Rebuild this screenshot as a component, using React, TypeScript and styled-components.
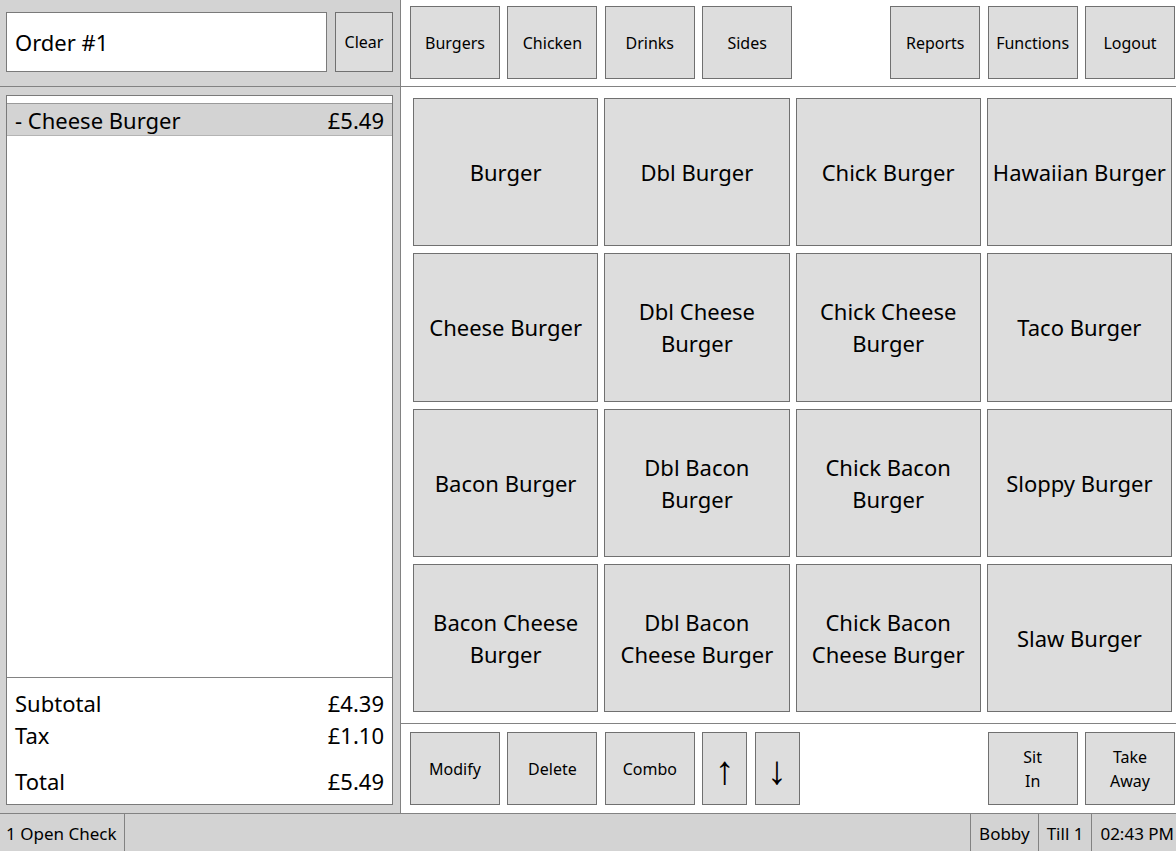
import React from 'react'
import styled, { createGlobalStyle } from 'styled-components'

const GlobalStyle = createGlobalStyle`
    html, body {
        margin:0;
        padding:0;
        background:#d3d3d3;
    }
    body {
        font-family:"Noto Sans", "Open Sans", sans-serif;
        color:#000;
    }
`

const categories = ['Burgers', 'Chicken', 'Drinks', 'Sides']
const systemButtons = ['Reports', 'Functions', 'Logout']

const products = [
    'Burger', 'Dbl Burger', 'Chick Burger', 'Hawaiian Burger',
    'Cheese Burger', 'Dbl Cheese Burger', 'Chick Cheese Burger', 'Taco Burger',
    'Bacon Burger', 'Dbl Bacon Burger', 'Chick Bacon Burger', 'Sloppy Burger',
    'Bacon Cheese Burger', 'Dbl Bacon Cheese Burger', 'Chick Bacon Cheese Burger', 'Slaw Burger',
]

// where the reference wraps the longer labels
const labelLines: Record<string, string[]> = {
    'Dbl Cheese Burger': ['Dbl Cheese', 'Burger'],
    'Chick Cheese Burger': ['Chick Cheese', 'Burger'],
    'Dbl Bacon Burger': ['Dbl Bacon', 'Burger'],
    'Chick Bacon Burger': ['Chick Bacon', 'Burger'],
    'Bacon Cheese Burger': ['Bacon Cheese', 'Burger'],
    'Dbl Bacon Cheese Burger': ['Dbl Bacon', 'Cheese Burger'],
    'Chick Bacon Cheese Burger': ['Chick Bacon', 'Cheese Burger'],
}

const App = () => {
  return (
      <>
        <GlobalStyle />
        <Screen>
            <Main>
                <LeftPanel>
                    <OrderHeader>
                        <OrderBox>Order #1</OrderBox>
                        <PosButton $width={58} $height={60}>Clear</PosButton>
                    </OrderHeader>
                    <ListArea>
                        <OrderList>
                            <ListTop />
                            <OrderRow>
                                <span>- Cheese Burger</span>
                                <span>£5.49</span>
                            </OrderRow>
                            <ListBody />
                            <Totals>
                                <TotalLine>
                                    <span>Subtotal</span>
                                    <span>£4.39</span>
                                </TotalLine>
                                <TotalLine>
                                    <span>Tax</span>
                                    <span>£1.10</span>
                                </TotalLine>
                                <TotalLine $gap={14}>
                                    <span>Total</span>
                                    <span>£5.49</span>
                                </TotalLine>
                            </Totals>
                        </OrderList>
                    </ListArea>
                </LeftPanel>

                <RightPanel>
                    <Toolbar $top>
                        {categories.map((c) => (
                            <PosButton key={c}>{c}</PosButton>
                        ))}
                        <Spacer />
                        {systemButtons.map((b) => (
                            <PosButton key={b}>{b}</PosButton>
                        ))}
                    </Toolbar>

                    <ProductGrid>
                        {products.map((p) => (
                            <ProductButton key={p}>
                                {(labelLines[p] || [p]).map((line) => (
                                    <span key={line}>{line}</span>
                                ))}
                            </ProductButton>
                        ))}
                    </ProductGrid>

                    <Toolbar>
                        <PosButton>Modify</PosButton>
                        <PosButton>Delete</PosButton>
                        <PosButton>Combo</PosButton>
                        <PosButton $width={45} $big>↑</PosButton>
                        <PosButton $width={45} $big>↓</PosButton>
                        <Spacer />
                        <PosButton>Sit<br />In</PosButton>
                        <PosButton>Take<br />Away</PosButton>
                    </Toolbar>
                </RightPanel>
            </Main>

            <StatusBar>
                <StatusItem $divider="right">1 Open Check</StatusItem>
                <Spacer />
                <StatusItem $divider="left">Bobby</StatusItem>
                <StatusItem $divider="left">Till 1</StatusItem>
                <StatusItem $divider="left">02:43 PM</StatusItem>
            </StatusBar>
        </Screen>
      </>
  )
}

export default App

const LINE = '#828282'

const Screen = styled.div`
    height:100vh;
    display:grid;
    grid-template-rows:1fr 38px;
    overflow:hidden;
`

const Main = styled.div`
    display:grid;
    grid-template-columns:401px 1fr;
    min-height:0;
`

const LeftPanel = styled.div`
    background:#d3d3d3;
    border-right:1px solid ${LINE};
    display:grid;
    grid-template-rows:87px 1fr;
    min-height:0;
`

const OrderHeader = styled.div`
    display:flex;
    align-items:flex-start;
    gap:8px;
    padding:12px 0 0 6px;
    border-bottom:1px solid ${LINE};
`

const OrderBox = styled.div`
    box-sizing:border-box;
    width:321px;
    height:60px;
    background:#fff;
    border:1px solid #7a7a7a;
    display:flex;
    align-items:center;
    padding-left:8px;
    font-size:22px;
`

const ListArea = styled.div`
    padding:8px 7px 8px 6px;
    display:flex;
    min-height:0;
`

const OrderList = styled.div`
    flex:1;
    background:#fff;
    border:1px solid #7a7a7a;
    display:flex;
    flex-direction:column;
    min-height:0;
`

const ListTop = styled.div`
    height:7px;
    border-bottom:1px solid #9a9a9a;
`

const OrderRow = styled.div`
    height:31px;
    background:#d3d3d3;
    border-bottom:1px solid #b4b4b4;
    display:flex;
    justify-content:space-between;
    align-items:center;
    padding:0 8px 0 8px;
    font-size:22px;
`

const ListBody = styled.div`
    flex:1;
`

const Totals = styled.div`
    border-top:1px solid ${LINE};
    padding:9px 8px 7px 8px;
`

const TotalLine = styled.div<{ $gap?: number }>`
    display:flex;
    justify-content:space-between;
    height:32px;
    line-height:32px;
    font-size:22px;
    margin-top:${(p) => p.$gap || 0}px;
`

const RightPanel = styled.div`
    background:#fff;
    display:grid;
    grid-template-rows:87px 1fr 90px;
    min-height:0;
`

const Toolbar = styled.div<{ $top?: boolean }>`
    display:flex;
    align-items:flex-start;
    gap:7.4px;
    padding:${(p) => (p.$top ? '6px 1px 0 9px' : '8px 1px 0 9px')};
    ${(p) => (p.$top ? `border-bottom:1px solid ${LINE};` : `border-top:1px solid ${LINE};`)}
`

const Spacer = styled.div`
    flex:1;
`

const PosButton = styled.button<{ $width?: number; $height?: number; $big?: boolean }>`
    box-sizing:border-box;
    flex:none;
    width:${(p) => p.$width || 90}px;
    height:${(p) => p.$height || 73}px;
    margin:0;
    padding:0;
    background:#dddddd;
    border:1px solid #707070;
    border-radius:0;
    font-family:"Noto Sans", "Open Sans", sans-serif;
    font-size:${(p) => (p.$big ? '40px' : '16px')};
    line-height:${(p) => (p.$big ? '1' : '24px')};
    color:#000;
    cursor:pointer;
`

const ProductGrid = styled.div`
    display:grid;
    grid-template-columns:repeat(4, 1fr);
    grid-template-rows:repeat(4, 1fr);
    column-gap:6px;
    row-gap:7px;
    padding:11px 4px 11px 12px;
    min-height:0;
`

const ProductButton = styled.button`
    box-sizing:border-box;
    margin:0;
    padding:0;
    background:#dddddd;
    border:1px solid #707070;
    border-radius:0;
    display:flex;
    flex-direction:column;
    align-items:center;
    justify-content:center;
    font-family:"Noto Sans", "Open Sans", sans-serif;
    font-size:22px;
    line-height:32px;
    color:#000;
    cursor:pointer;
`

const StatusBar = styled.div`
    background:#d3d3d3;
    border-top:1px solid ${LINE};
    display:flex;
    align-items:stretch;
    font-size:17px;
`

const StatusItem = styled.div<{ $divider: 'left' | 'right' }>`
    display:flex;
    align-items:center;
    padding:${(p) => (p.$divider === 'left' ? '2px 8px 0 8px' : '2px 8px 0 6px')};
    ${(p) => (p.$divider === 'left' ? `border-left:1px solid ${LINE};` : `border-right:1px solid ${LINE};`)}

    &:last-child {
        padding-right:2px;
    }
`
